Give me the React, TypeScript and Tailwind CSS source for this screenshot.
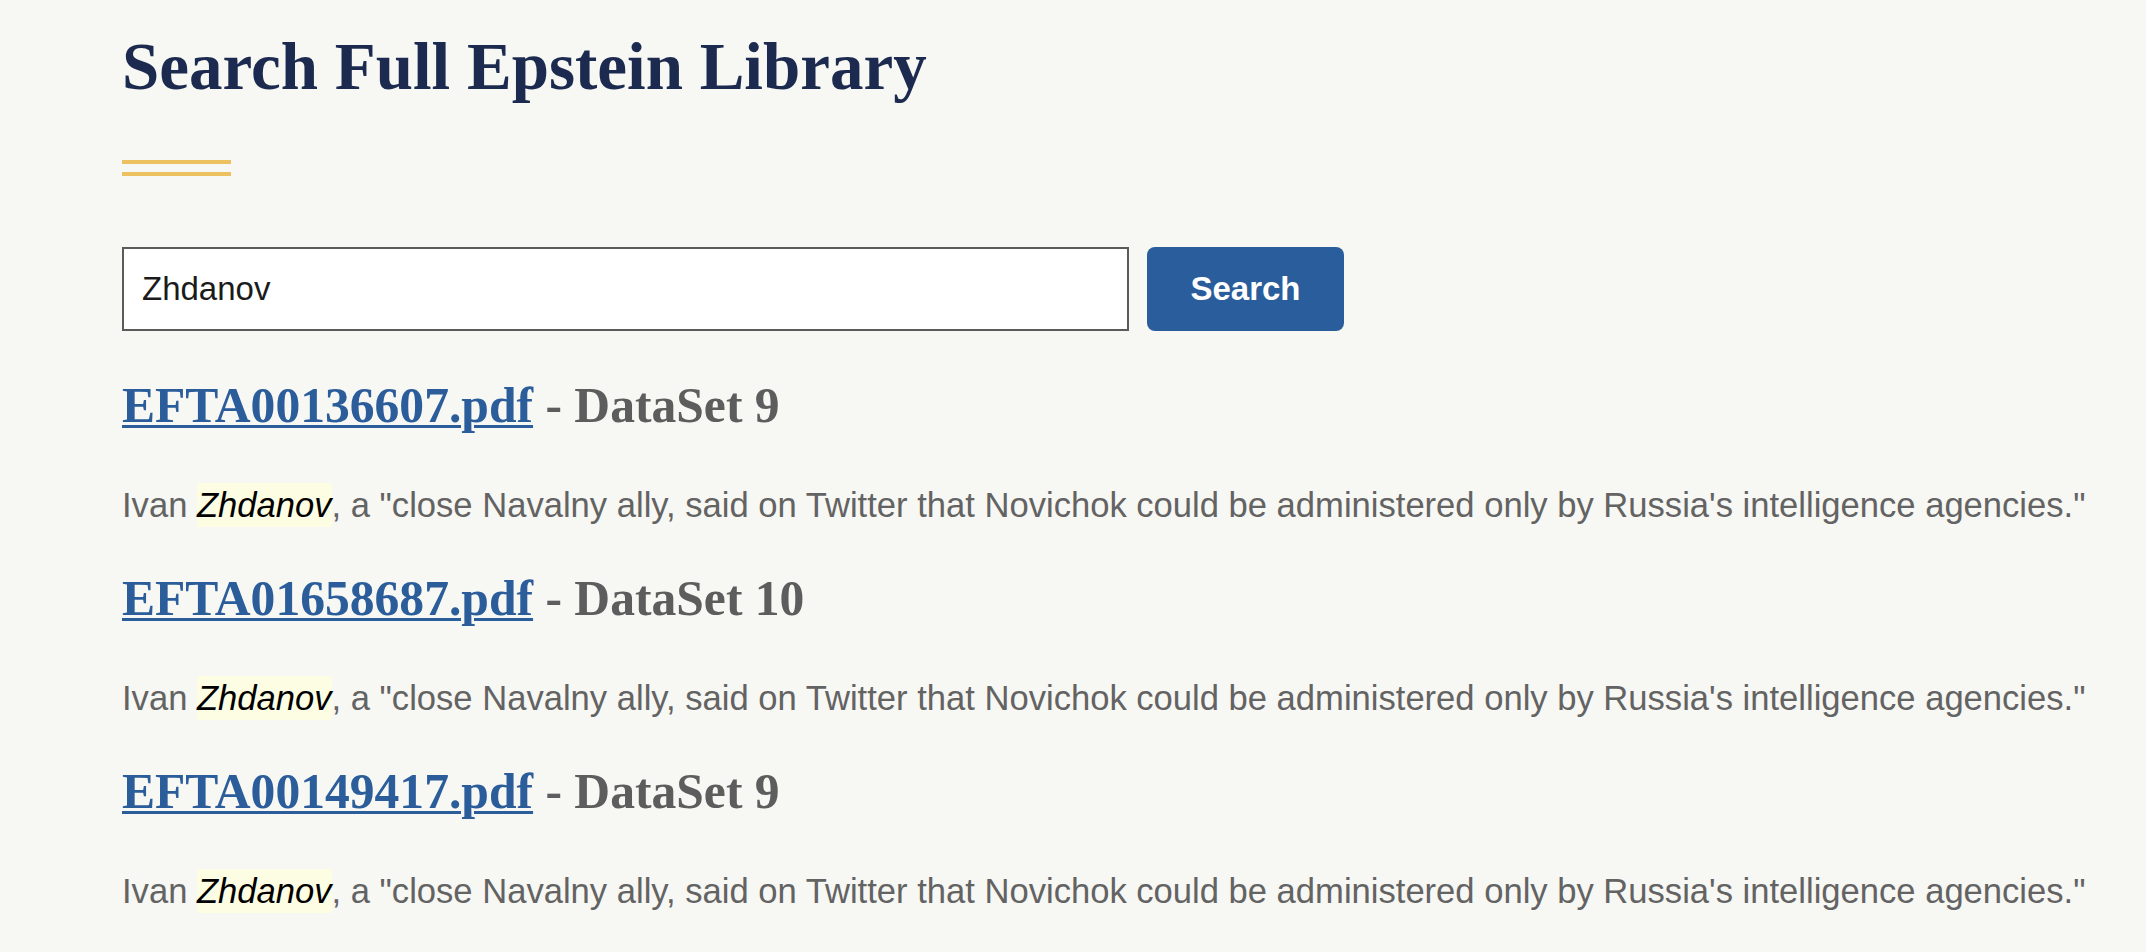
import React from "react";

const results = [
  { file: "EFTA00136607.pdf", ds: "DataSet 9" },
  { file: "EFTA01658687.pdf", ds: "DataSet 10" },
  { file: "EFTA00149417.pdf", ds: "DataSet 9" },
];

export default function App() {
  return (
    <div className="min-h-[952px] w-full bg-[#f7f7f3] pl-[122px] pt-[26px] [font-family:'Liberation_Sans',Arial,sans-serif]">
      <h1 className="m-0 text-[67px] leading-[80px] font-bold text-[#1b2a4e] [font-family:'Liberation_Serif','Times_New_Roman',serif]">
        Search Full Epstein Library
      </h1>
      <div className="mt-[54px] flex w-[109px] flex-col gap-[8px]">
        <div className="h-[4px] bg-[#ecc261]" />
        <div className="h-[4px] bg-[#ecc261]" />
      </div>
      <div className="mt-[71px] flex gap-[18px]">
        <div className="flex h-[84px] w-[1007px] items-center border-2 border-[#5b5b5b] bg-white pl-[18px] text-[33px] text-[#1b1b1b]">
          Zhdanov
        </div>
        <button className="flex h-[84px] w-[197px] items-center justify-center rounded-[8px] bg-[#2a5d9b] text-[33px] font-bold text-white">
          Search
        </button>
      </div>
      <div className="mt-[45px] flex flex-col">
        {results.map((r, i) => (
          <div key={i} className="flex flex-col pb-[42px]">
            <div className="text-[49.6px] leading-[60px] font-bold [font-family:'Liberation_Serif','Times_New_Roman',serif]">
              <a className="text-[#2b5d9b] underline decoration-[3px] underline-offset-[3px]" href="#">
                {r.file}
              </a>
              <span className="text-[#5d5d5d]"> - {r.ds}</span>
            </div>
            <p className="mt-[47px] text-[34.6px] leading-[44px] text-[#636363]">
              Ivan{" "}
              <em className="bg-[#fdfde3] py-[3px] text-black">Zhdanov</em>, a "close Navalny ally, said on
              Twitter that Novichok could be administered only by Russia's intelligence agencies."
            </p>
          </div>
        ))}
      </div>
    </div>
  );
}
